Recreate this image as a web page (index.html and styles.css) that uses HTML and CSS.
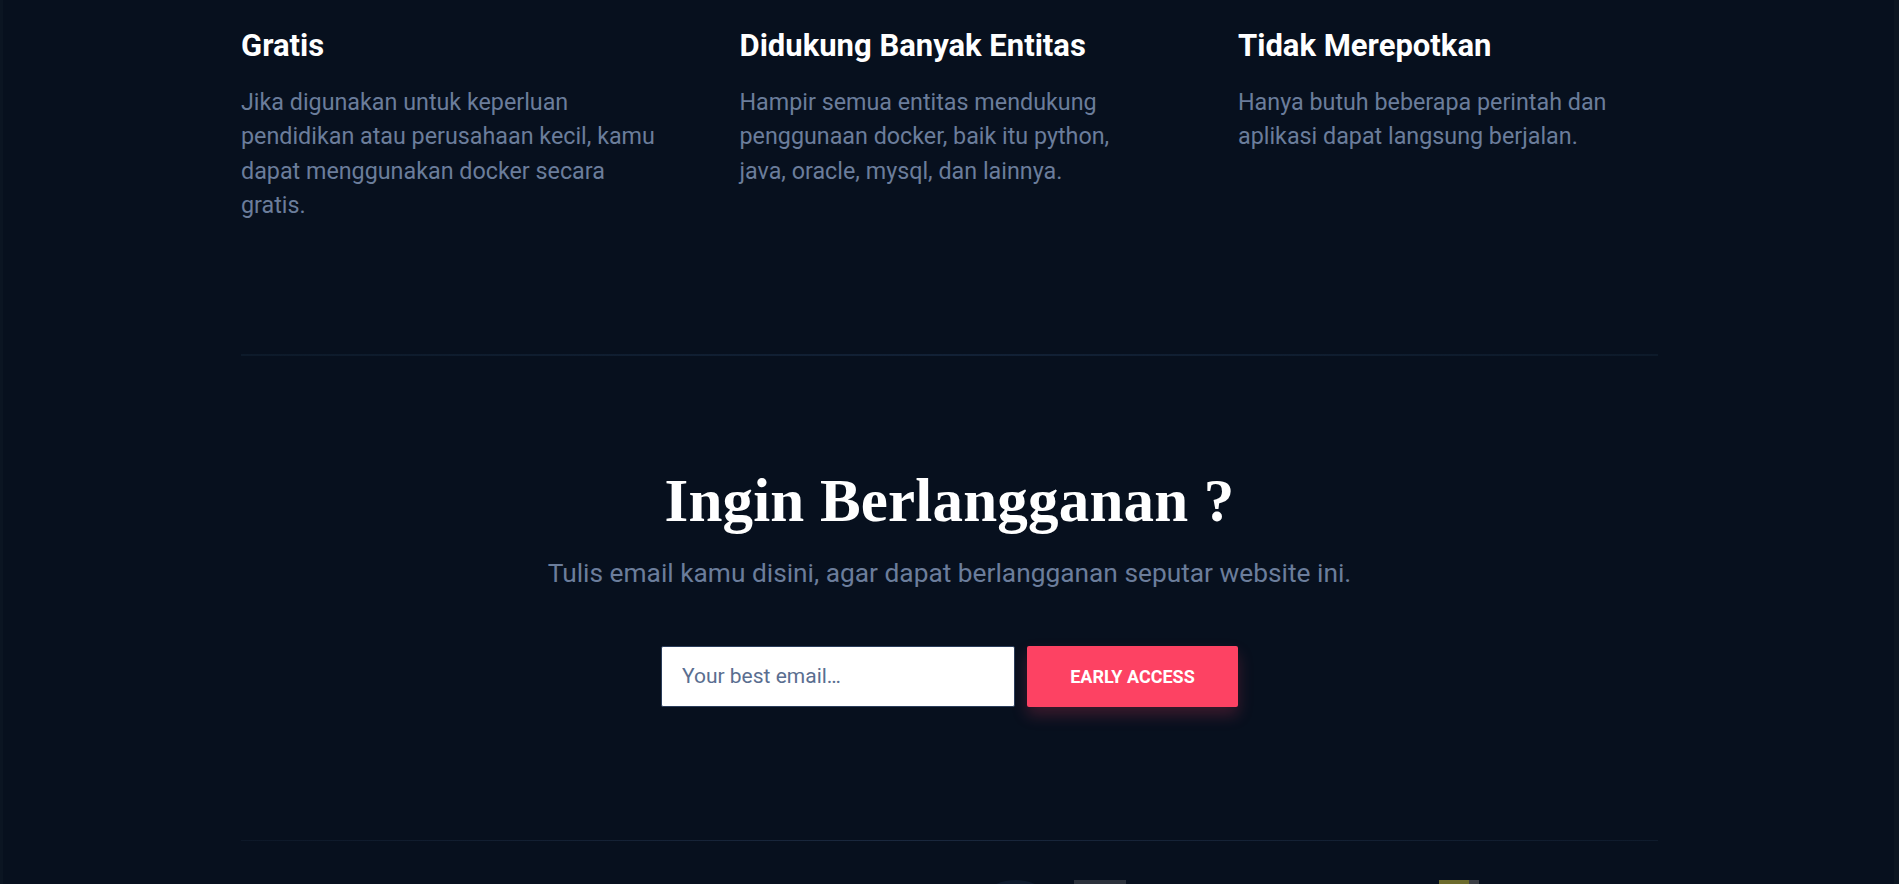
FILE: index.html
```html
<!DOCTYPE html>
<html lang="id">
<head>
<meta charset="utf-8">
<title>Ingin Berlangganan</title>
<link rel="stylesheet" href="styles.css">
</head>
<body>
<div class="page">
  <section class="features">
    <div class="container features-grid">
      <div class="feature">
        <h4 class="feature-title">Gratis</h4>
        <p class="feature-text">Jika digunakan untuk keperluan pendidikan atau perusahaan kecil, kamu dapat menggunakan docker secara gratis.</p>
      </div>
      <div class="feature">
        <h4 class="feature-title">Didukung Banyak Entitas</h4>
        <p class="feature-text">Hampir semua entitas mendukung penggunaan docker, baik itu python, java, oracle, mysql, dan lainnya.</p>
      </div>
      <div class="feature">
        <h4 class="feature-title">Tidak Merepotkan</h4>
        <p class="feature-text">Hanya butuh beberapa perintah dan aplikasi dapat langsung berjalan.</p>
      </div>
    </div>
  </section>

  <div class="container"><div class="divider"></div></div>

  <section class="newsletter">
    <h2 class="newsletter-title">Ingin Berlangganan ?</h2>
    <p class="newsletter-sub">Tulis email kamu disini, agar dapat berlangganan seputar website ini.</p>
    <form class="newsletter-form">
      <input class="email-input" type="email" placeholder="Your best email…">
      <button class="btn-primary" type="button">EARLY ACCESS</button>
    </form>
  </section>

  <div class="container"><div class="divider divider-bottom"></div></div>

  <footer class="footer">
    <div class="logo logo-dark"></div>
    <div class="logo logo-gray"></div>
    <div class="logo-spacer"></div>
    <div class="logo logo-olive"></div>
  </footer>
</div>
</body>
</html>
```
FILE: styles.css
```css
html, body {
  margin: 0;
  padding: 0;
  background: #07101e;
}

body {
  font-family: Roboto, "Liberation Sans", sans-serif;
  color: #6b7d9b;
  overflow: hidden;
}

.page {
  min-height: 100vh;
  box-shadow: inset 3px 0 0 #0b1522, inset -5px 0 0 #0c1521;
}

.container {
  max-width: 1417px;
  margin: 0 auto;
}

.features {
  padding: 26px 0 131px;
}

.features-grid {
  display: grid;
  grid-template-columns: repeat(3, 418px);
  column-gap: 80.5px;
}

.feature-title {
  margin: 0 0 19px;
  font-size: 31px;
  line-height: 40px;
  font-weight: 700;
  color: #ffffff;
}

.feature-text {
  margin: 0;
  font-size: 23.3px;
  line-height: 34.4px;
  color: #6b7d9b;
}

.divider {
  height: 2px;
  background: linear-gradient(to right, #0d1a2a 0%, #122136 50%, #0d1a2a 100%);
}

.divider-bottom {
  height: 1px;
  background: linear-gradient(to right, #0d1828 0%, #1a283e 45%, #0f1b2c 100%);
}

.newsletter {
  padding: 109px 0 133px;
  display: flex;
  flex-direction: column;
  align-items: center;
  text-align: center;
}

.newsletter-title {
  margin: 0;
  font-family: "Liberation Serif", "DejaVu Serif", serif;
  font-weight: 700;
  font-size: 61px;
  line-height: 72px;
  color: #ffffff;
  letter-spacing: 0.2px;
}

.newsletter-sub {
  margin: 18px 0 0;
  font-size: 26.3px;
  line-height: 36px;
  color: #6b7d9b;
}

.newsletter-form {
  margin-top: 55px;
  display: flex;
  gap: 12px;
}

.email-input {
  box-sizing: border-box;
  width: 354px;
  height: 61px;
  padding: 0 20px;
  border: 1px solid #2b3d5a;
  border-radius: 2px;
  background: #ffffff;
  font-family: Roboto, "Liberation Sans", sans-serif;
  font-size: 21px;
  color: #1d2b42;
  outline: none;
}

.email-input::placeholder {
  color: #5a6e90;
  opacity: 1;
}

.btn-primary {
  box-sizing: border-box;
  width: 211px;
  height: 61px;
  border: none;
  border-radius: 2px;
  background: #fd4263;
  color: #ffffff;
  font-family: Roboto, "Liberation Sans", sans-serif;
  font-weight: 700;
  font-size: 18px;
  box-shadow: 0 8px 16px rgba(253, 66, 99, 0.22);
  cursor: pointer;
}

.footer {
  display: flex;
  margin-left: 990px;
  padding-top: 39px;
  gap: 33px;
  align-items: flex-start;
}

.logo {
  height: 24px;
}

.logo-dark {
  width: 51px;
  border-radius: 50% 50% 0 0;
  background: #0e1a2d;
}

.logo-gray {
  width: 52px;
  background: #2b313b;
}

.logo-spacer {
  width: 247px;
}

.logo-olive {
  width: 40px;
  background: linear-gradient(to right, #6c6b2c 0 75%, #3a3d44 75%);
}
```
